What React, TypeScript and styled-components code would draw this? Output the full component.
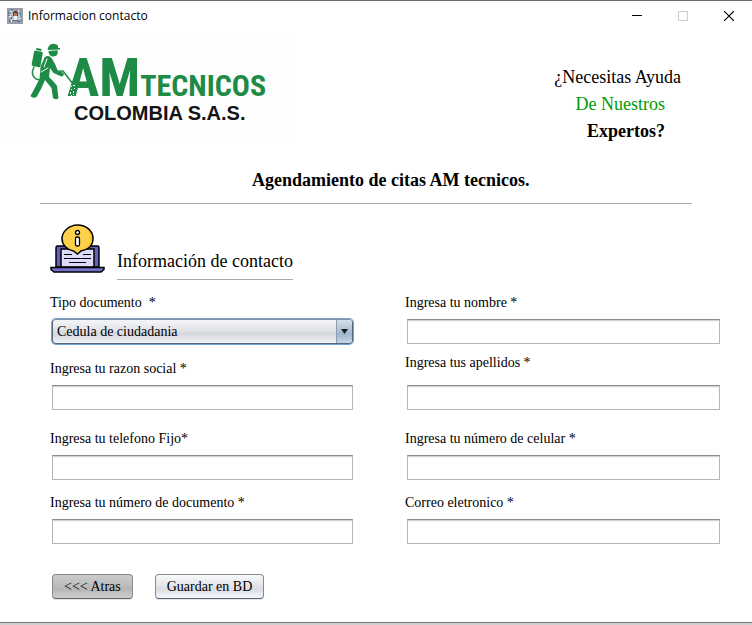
import React from "react";
import styled, { createGlobalStyle, css } from "styled-components";

const serif = `"Liberation Serif", "Times New Roman", serif`;

const GlobalStyle = createGlobalStyle`
  *, *::before, *::after { box-sizing: border-box; }
  body { margin: 0; background: #fff; font-family: ${serif}; color: #000; }
`;

const Frame = styled.div`
  display: flex;
  flex-direction: column;
  min-height: 100vh;
  border-top: 1px solid #6b6b6b;
  background: #fff;
`;

const TitleBar = styled.header`
  display: flex;
  align-items: center;
  height: 29px;
  padding-left: 7px;
  gap: 5px;
  font: 12px/16px "Open Sans", sans-serif;
`;

const Caption = styled.span`
  flex: 1;
`;

const Controls = styled.div`
  display: flex;
`;

const ControlButton = styled.button`
  display: grid;
  place-items: center;
  width: 46px;
  height: 29px;
  padding: 0;
  border: 0;
  background: none;
  color: #000;

  &:disabled { color: #ccc; }
`;

const Content = styled.main`
  flex: 1;
`;

const Banner = styled.div`
  display: flex;
  justify-content: space-between;
  align-items: flex-start;
  padding: 8px 71px 0 7px;
`;

const Logo = styled.div`
  display: flex;
  width: 288px;
  height: 102px;
  padding: 5px 0 0 22px;
  background: #fdfefd;
`;

const SprayerSvg = styled.svg`
  flex: none;
`;

const Wordmark = styled.div`
  margin-left: -10px;
  white-space: nowrap;
`;

const BrandLine = styled.div`
  display: flex;
  align-items: baseline;
  height: 60px;
  color: #1d8b45;
  font-family: "Roboto Condensed", Roboto, sans-serif;
  font-weight: 700;
  line-height: 70px;
`;

const BrandLarge = styled.span`
  font-size: 54px;
`;

const BrandSmall = styled.span`
  font-size: 30px;
`;

const Country = styled.div`
  padding-left: 7px;
  color: #151515;
  font: 700 20px/20px "Liberation Sans", Arial, sans-serif;
`;

const Help = styled.div`
  display: flex;
  flex-direction: column;
  align-items: flex-end;
  padding: 26px 16px 0 0;
  font-size: 18px;
  line-height: 27px;
`;

const HelpQuestion = styled.span`
  margin-right: -16px;
`;

const HelpOurs = styled.span`
  color: #009b00;
`;

const Heading = styled.h1`
  margin: 24px 60px 0 40px;
  padding: 0 0 12px 212px;
  border-bottom: 1px solid #a9a9b3;
  font-size: 18px;
  line-height: 22px;
`;

const Section = styled.div`
  display: flex;
  align-items: flex-end;
  gap: 12px;
  height: 76px;
  padding-left: 50px;
`;

const SectionIcon = styled.svg`
  margin-bottom: 6px;
`;

const SectionTitle = styled.h2`
  margin: 0;
  padding-bottom: 7px;
  border-bottom: 1px solid #a9a9b3;
  font-size: 18px;
  font-weight: 400;
  line-height: 22px;
`;

const Form = styled.form`
  padding: 14px 32px 20px 50px;
`;

const Fields = styled.div`
  display: grid;
  grid-template-columns: 303fr 315fr;
  grid-template-rows: 50px 66px 70px 64px;
  column-gap: 52px;
  align-items: end;
`;

const Field = styled.div<{ $loose?: boolean }>`
  display: flex;
  flex-direction: column;
  gap: ${(p) => (p.$loose ? 14 : 8)}px;
`;

const Label = styled.label`
  font-size: 14px;
  line-height: 16px;
  white-space: pre;
`;

const TextInput = styled.input`
  height: 25px;
  margin: 0 0 0 2px;
  padding: 0 5px;
  border: 1px solid #b5b5b5;
  border-top-color: #8c8c8c;
  border-radius: 0;
  background: #fff;
  box-shadow: inset 0 1px #d3d3d3, inset 0 2px #f3f3f3;
  font: 14px/16px ${serif};
  outline: 0;
`;

const SelectBox = styled.div`
  position: relative;
  height: 25px;
  margin: 0 0 0 2px;
`;

const Select = styled.select`
  appearance: none;
  width: 100%;
  height: 25px;
  padding: 0 24px 0 4px;
  border: 1px solid #57687c;
  border-top-color: #8793a3;
  border-radius: 4px;
  background: linear-gradient(#f5f6f8, #dfe1e6 49%, #d3d6dc 60%, #f0f3f8);
  box-shadow: 0 0 0 1px #73a4d1;
  color: #000;
  font: 14px/16px ${serif};
  outline: 0;
`;

const SelectArrow = styled.span`
  position: absolute;
  top: 1px;
  right: 1px;
  bottom: 1px;
  display: grid;
  place-items: center;
  width: 16px;
  border-left: 1px solid #8ba0b5;
  border-radius: 0 3px 3px 0;
  background: linear-gradient(#d5e0ea, #a9bdcf 50%, #9fb5c9 60%, #c4d6e6);
  pointer-events: none;
`;

const Actions = styled.div`
  display: flex;
  gap: 22px;
  padding: 30px 0 0 2px;
`;

const ActionButton = styled.button<{ $muted?: boolean }>`
  height: 25px;
  padding: 0 11px;
  border: 1px solid #858991;
  border-bottom-color: #5c6068;
  border-radius: 4px;
  box-shadow: 0 1px #e6e6e6;
  color: #000;
  font: 14px/16px ${serif};
  ${(p) =>
    p.$muted
      ? css`background: linear-gradient(#cbcbcb, #bcbcbc 50%, #b5b5b5 60%, #cecece);`
      : css`background: linear-gradient(#f8f9fa, #e1e3e8 50%, #d8dbe2 60%, #f3f7fe);`}
`;

const BottomEdge = styled.footer`
  height: 3px;
  border-top: 1px solid #737873;
  background: #cdd0cd;
`;

function AppIcon() {
  return (
    <svg width="16" height="16" viewBox="0 0 16 16" shapeRendering="crispEdges" aria-hidden="true">
      <path fill="#9b9cac" d="M0 0h16v16H0z" />
      <circle cx="8" cy="8" r="5" fill="#b3c3cc" />
      <path fill="#e4f4f6" d="M3 3h2v1H3zM11 2h1v2h-1zM2 8h2v1H2zM12 10h2v1h-2zM7 8h3v4H7zM4 12h1v2H4z" />
      <path fill="#347c9b" d="M1 4h1v2H1zM4 1h2v1H4zM13 5h1v2h-1zM2 12h1v2H2zM11 13h2v1h-2zM4 9h1v2H4z" />
      <path fill="#5f3827" d="M7 3h3v2H7zM6 4h1v4H6zM10 4h1v4h-1z" />
      <path fill="#b67b65" d="M7 5h3v3H7z" />
      <path fill="#b84c54" d="M1 7h1v1H1zM10 1h1v1h-1zM14 12h1v1h-1z" />
      <path fill="#567080" d="M6 12h5v1H6z" />
    </svg>
  );
}

function Sprayer() {
  return (
    <SprayerSvg width="48" height="58" viewBox="0 0 48 58" aria-hidden="true">
      <g fill="#1d8b45">
        <path d="M19 5C20 0 27-.5 29 3v2h2v1.500L18.500 7z" />
        <path d="M19.500 8l9-.7c1 4-1 6.200-4 6.200-3 0-5-2-5-5.500z" />
        <path d="M5 9q0-1.500 1.500-1.200l6 1q1.500.3 1.200 1.700L11.500 23q-.3 1.500-1.700 1.200l-6-1.200Q2.500 22.700 2.700 21zM7.500 5l5 1-.5 2-5-1z" />
        <path d="M15.500 14.500q4-3 7 .5l3.500 6 2.500 6 6 3q1 3-2 3.500l-8-3.500-3.500-5-1 9 5 5 3 4 1.500 12q-2 2.500-5.500 0l-1.500-10-6.500-8-4 9-4.500 8q-4 2-6-1l9-17 1-12z" />
      </g>
      <g fill="none" stroke="#1d8b45" strokeLinecap="round">
        <path strokeWidth="1.500" d="M5 24q-4 8 2 12l4 1" />
        <path strokeWidth="1.500" d="M31 28l3 0 10 13" />
        <path stroke="#fff" strokeWidth="1" d="M18 16l-3 8M12 29l7-4" />
      </g>
    </SprayerSvg>
  );
}

function SprayMark() {
  return (
    <MarkSvg width="9" height="13" viewBox="0 0 9 13" aria-hidden="true">
      <path fill="#fff" d="M3 1h1v1H3zM5 0h2v1H5zM3 4h1v1H3zM6 3h1v1H6zM2 7h1v2H2zM5 6h1v2H5zM3 10h1v1H3zM5 9h1v1H5z" />
    </MarkSvg>
  );
}

const BrandArea = styled.div`
  position: relative;
`;

const MarkSvg = styled.svg`
  position: absolute;
  top: 42px;
  left: 1px;
`;

function LaptopInfo() {
  return (
    <SectionIcon width="55" height="50" viewBox="0 0 55 50" aria-hidden="true">
      <path d="M7 22h41q1 0 1 2v19H6V24q0-2 1-2z" fill="#6562bd" stroke="#000" strokeWidth="1.500" />
      <path d="M11 25h33v18H11z" fill="#dedbfa" stroke="#000" strokeWidth="1.500" />
      <path d="M1 43.500h53v2l-3 2.500H4l-3-2.500z" fill="#7571ca" stroke="#000" strokeWidth="1.500" />
      <path d="M14 30.500h8M33 30.500h8M14 34.500h27M19 38.500h17" stroke="#000" />
      <path d="M27.500 1C36 1 43 7 43 14.500S37 26 31 27l-3.500 3-4-3C17 26 12 21 12 14.500S19 1 27.500 1z" fill="#ffd14b" stroke="#000" strokeWidth="1.500" />
      <path d="M35 4c9 7 7 18-2 21 8-1 9-7 9-11s-3-8-7-10z" fill="#ffc01b" />
      <circle cx="27.500" cy="8.500" r="2" fill="#fff" stroke="#000" strokeWidth="1.300" />
      <rect x="25.500" y="13" width="4" height="9" rx="1.500" fill="#fff" stroke="#000" strokeWidth="1.300" />
    </SectionIcon>
  );
}

type FieldInfo = { id: string; label: string; loose?: boolean };

const fields: FieldInfo[] = [
  { id: "nombre", label: "Ingresa tu nombre *" },
  { id: "razon", label: "Ingresa tu razon social *" },
  { id: "apellidos", label: "Ingresa tus apellidos *", loose: true },
  { id: "telefono", label: "Ingresa tu telefono Fijo*" },
  { id: "celular", label: "Ingresa tu número de celular *" },
  { id: "documento", label: "Ingresa tu número de documento *" },
  { id: "correo", label: "Correo eletronico *" },
];

export default function App() {
  return (
    <>
      <GlobalStyle />
      <Frame>
        <TitleBar>
          <AppIcon />
          <Caption>Informacion contacto</Caption>
          <Controls>
            <ControlButton type="button" aria-label="Minimizar">
              <svg width="10" height="10" viewBox="0 0 10 10"><path d="M0 4.500h10" stroke="currentColor" /></svg>
            </ControlButton>
            <ControlButton type="button" aria-label="Maximizar" disabled>
              <svg width="10" height="10" viewBox="0 0 10 10"><path d="M.5.500h9v9h-9z" fill="none" stroke="currentColor" /></svg>
            </ControlButton>
            <ControlButton type="button" aria-label="Cerrar">
              <svg width="10" height="10" viewBox="0 0 10 10"><path d="M0 0l10 10M10 0L0 10" stroke="currentColor" strokeWidth="1.200" /></svg>
            </ControlButton>
          </Controls>
        </TitleBar>
        <Content>
          <Banner>
            <Logo>
              <Sprayer />
              <Wordmark>
                <BrandArea>
                  <BrandLine>
                    <BrandLarge>AM</BrandLarge>
                    <BrandSmall>TECNICOS</BrandSmall>
                  </BrandLine>
                  <SprayMark />
                </BrandArea>
                <Country>COLOMBIA S.A.S.</Country>
              </Wordmark>
            </Logo>
            <Help>
              <HelpQuestion>¿Necesitas Ayuda</HelpQuestion>
              <HelpOurs>De Nuestros</HelpOurs>
              <strong>Expertos?</strong>
            </Help>
          </Banner>
          <Heading>Agendamiento de citas AM tecnicos.</Heading>
          <Section>
            <LaptopInfo />
            <SectionTitle>Información de contacto</SectionTitle>
          </Section>
          <Form onSubmit={(e) => e.preventDefault()}>
            <Fields>
              <Field>
                <Label htmlFor="tipo">{"Tipo documento  *"}</Label>
                <SelectBox>
                  <Select id="tipo" defaultValue="cedula">
                    <option value="cedula">Cedula de ciudadania</option>
                  </Select>
                  <SelectArrow>
                    <svg width="7" height="5" viewBox="0 0 7 5" aria-hidden="true"><path d="M0 0h7L3.500 5z" fill="#151a20" /></svg>
                  </SelectArrow>
                </SelectBox>
              </Field>
              {fields.map((f) => (
                <Field key={f.id} $loose={f.loose}>
                  <Label htmlFor={f.id}>{f.label}</Label>
                  <TextInput id={f.id} type="text" />
                </Field>
              ))}
            </Fields>
            <Actions>
              <ActionButton type="button" $muted>{"<<< Atras"}</ActionButton>
              <ActionButton type="submit">Guardar en BD</ActionButton>
            </Actions>
          </Form>
        </Content>
        <BottomEdge />
      </Frame>
    </>
  );
}
